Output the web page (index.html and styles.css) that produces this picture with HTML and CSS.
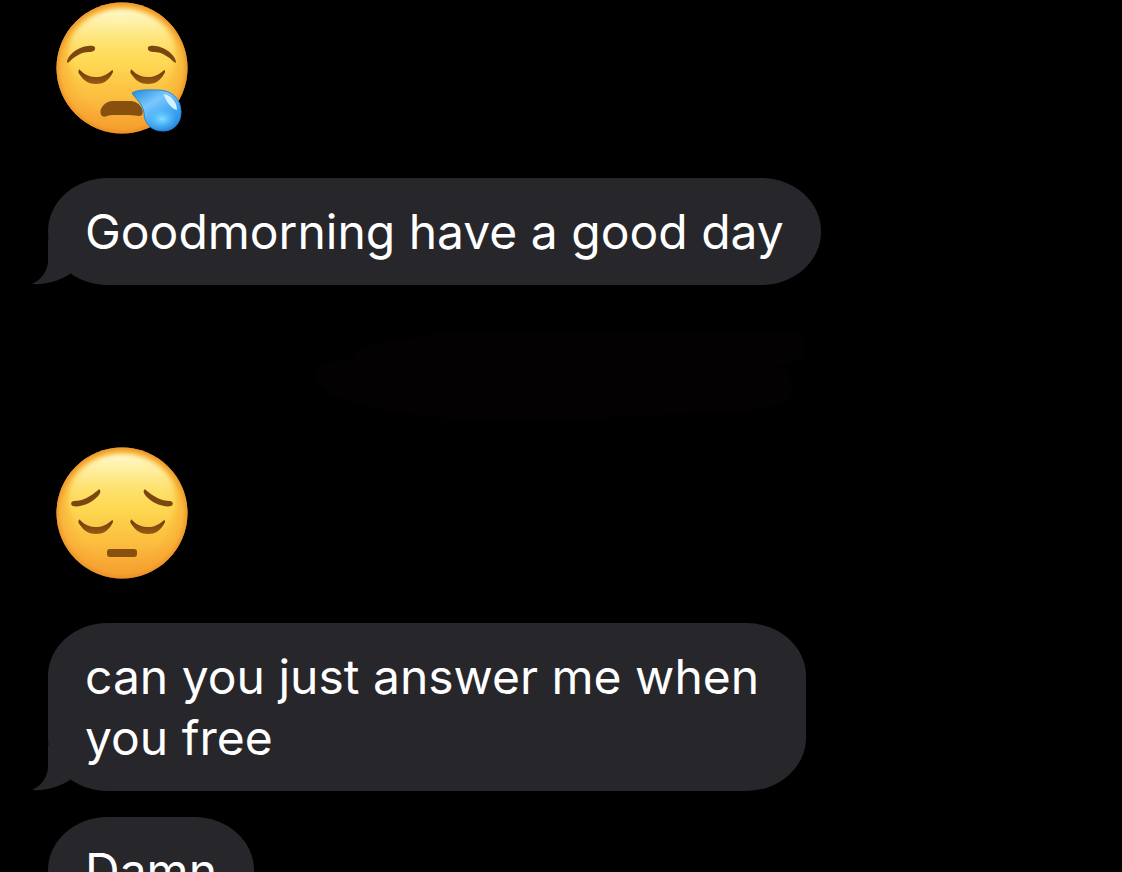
FILE: index.html
```
<!DOCTYPE html>
<html lang="en">
<head>
    <meta charset="utf-8">
    <meta name="viewport" content="width=device-width, initial-scale=1">
    <title>Messages</title>
    <link rel="stylesheet" href="styles.css">
</head>
<body>
    <!-- shared emoji and tail shapes -->
    <svg class="defs" aria-hidden="true">
        <defs>
            <linearGradient id="face-fill" x1="0" y1="0" x2="0" y2="1">
                <stop offset="0" stop-color="#fdc741"/>
                <stop offset="0.45" stop-color="#fdd048"/>
                <stop offset="0.72" stop-color="#fcbf40"/>
                <stop offset="1" stop-color="#f49a2c"/>
            </linearGradient>
            <radialGradient id="face-edge" cx="0.5" cy="0.5" r="0.5">
                <stop offset="0.7" stop-color="#f7a733" stop-opacity="0"/>
                <stop offset="0.92" stop-color="#f5a230" stop-opacity="0.5"/>
                <stop offset="1" stop-color="#e98a25" stop-opacity="0.8"/>
            </radialGradient>
            <linearGradient id="face-shine" x1="0" y1="0" x2="0" y2="1">
                <stop offset="0" stop-color="#fffad0"/>
                <stop offset="0.25" stop-color="#fff09a" stop-opacity="0.85"/>
                <stop offset="0.55" stop-color="#ffe567" stop-opacity="0.5"/>
                <stop offset="0.9" stop-color="#ffdd55" stop-opacity="0"/>
            </linearGradient>
            <linearGradient id="brown" x1="0" y1="0" x2="0" y2="1">
                <stop offset="0" stop-color="#6b3a08"/>
                <stop offset="1" stop-color="#995b15"/>
            </linearGradient>
            <linearGradient id="drop-fill" x1="0.1" y1="0" x2="0.8" y2="1">
                <stop offset="0" stop-color="#2c8fdd"/>
                <stop offset="0.35" stop-color="#7ac8fc"/>
                <stop offset="0.65" stop-color="#43a8f6"/>
                <stop offset="1" stop-color="#2688e0"/>
            </linearGradient>
            <radialGradient id="drop-glow">
                <stop offset="0" stop-color="#7fe0ff"/>
                <stop offset="1" stop-color="#5cc2fa" stop-opacity="0"/>
            </radialGradient>
            <filter id="soft" x="-10%" y="-10%" width="120%" height="120%">
                <feGaussianBlur stdDeviation="2"/>
            </filter>
            <g id="face">
                <circle cx="66" cy="66" r="65.5" fill="url(#face-fill)"/>
                <circle cx="66" cy="66" r="65.5" fill="url(#face-edge)"/>
                <ellipse cx="66" cy="52" rx="54" ry="45" fill="url(#face-shine)" filter="url(#soft)"/>
            </g>
            <g id="eyes" fill="url(#brown)">
                <path id="eye" d="M23 68C22 69 22 71 24 73C28 79 33 82 40 82C47 82 52 79 56 72C58 69 57 67 55 69C50 73 46 75 40 75C34 75 29 73 25 69C24 68 23 67 23 68Z"/>
                <use href="#eye" x="52"/>
            </g>
            <path id="brow-arch" d="M11 60C11 55 20 45 32 44C36 43 40 44 39 47C39 49 36 50 33 50C25 50 18 55 13 60C12 61 11 61 11 60Z"/>
            <path id="brow-droop" d="M44 43C46 46 40 52 33 56C27 59 20 60 17 59C14 58 15 54 18 54C27 54 35 49 41 44C42 43 43 42 44 43Z"/>
            <path id="tail-shape" d="M16 0V18C17 30 11 40 0 45C13 46 27 42 38 35V0Z"/>
        </defs>
    </svg>

    <main class="thread">
        <div class="emoji">
            <svg viewBox="0 0 132 132" role="img" aria-label="Sleepy face">
                <use href="#face"/>
                <use href="#eyes"/>
                <use href="#brow-arch" class="brow"/>
                <use href="#brow-arch" class="brow" transform="matrix(-1 0 0 1 131 0)"/>
                <path d="M46 114C42 110 46 100 56 99H74C83 99 89 108 86 113C83 115 80 113 73 113H57C51 113 49 116 46 114Z" class="mouth"/>
                <path d="M76 91C82 87 93 88 102 88C116 88 125 97 125 110C125 122 117 129 107 129C95 129 88 121 88 111C87 102 79 96 76 91Z" class="drop"/>
                <ellipse cx="106" cy="117" rx="15" ry="11" fill="url(#drop-glow)"/>
                <path d="M108 92C116 94 121 101 121 108C117 108 109 99 108 92Z" class="drop-shine"/>
            </svg>
        </div>

        <div class="bubble">
            Goodmorning have a good day
            <svg class="tail" viewBox="0 0 38 46" aria-hidden="true"><use href="#tail-shape"/></svg>
        </div>

        <div class="timestamp">
            <svg class="smudge" viewBox="0 0 492 92" aria-hidden="true">
                <path d="M0 48C1 30 15 32 35 30C43 14 65 12 95 8C130 2 160 1 210 1H470C487 0 493 10 490 20C488 30 477 33 464 36C475 45 487 60 469 74C440 84 350 84 290 88C220 92 130 91 80 82C45 76 3 66 0 48Z"/>
            </svg>
        </div>

        <div class="emoji">
            <svg viewBox="0 0 132 132" role="img" aria-label="Pensive face">
                <use href="#face"/>
                <use href="#eyes" y="5"/>
                <use href="#brow-droop" class="brow"/>
                <use href="#brow-droop" class="brow" transform="matrix(-1 0 0 1 132 0)"/>
                <rect x="51" y="102" width="30" height="8" rx="3" class="mouth"/>
            </svg>
        </div>

        <div class="bubble long">
            can you just answer me when you free
            <svg class="tail" viewBox="0 0 38 46" aria-hidden="true"><use href="#tail-shape"/></svg>
        </div>

        <div class="bubble">Damn</div>
    </main>
</body>
</html>
```
FILE: styles.css
```
* {
    margin: 0;
    padding: 0;
    box-sizing: border-box;
}

html {
    overflow: hidden;
}

body {
    height: 100vh;
    overflow: hidden;
    background: #000;
    color: #fff;
    font-family: Inter, "Liberation Sans", sans-serif;
}

.defs {
    position: absolute;
    width: 0;
    height: 0;
}

.thread {
    display: flex;
    flex-direction: column;
    align-items: flex-start;
    padding: 2px 48px 0;
}

.emoji {
    width: 132px;
    height: 132px;
    margin-left: 8px;
    margin-bottom: 44px;
}

.emoji svg {
    display: block;
    width: 100%;
    height: 100%;
}

.brow {
    fill: #7b4610;
}

.mouth {
    fill: #87500f;
}

.drop {
    fill: url(#drop-fill);
    stroke: #2a86d8;
    stroke-width: 1;
}

.drop-shine {
    fill: #d5f3ff;
}

.bubble {
    position: relative;
    max-width: 78%;
    padding: 23px 37px;
    border-radius: 60px / 53px;
    background: #27262b;
    font-size: 48px;
    line-height: 61px;
}

.bubble.long {
    max-width: 758px;
    margin-bottom: 26px;
}

.tail {
    position: absolute;
    left: -16px;
    bottom: 0;
    width: 38px;
    height: 46px;
    fill: #27262b;
}

.timestamp {
    display: flex;
    justify-content: center;
    width: 100%;
    padding: 45px 0 25px;
}

.smudge {
    width: 492px;
    height: 92px;
    fill: #030102;
}
```
